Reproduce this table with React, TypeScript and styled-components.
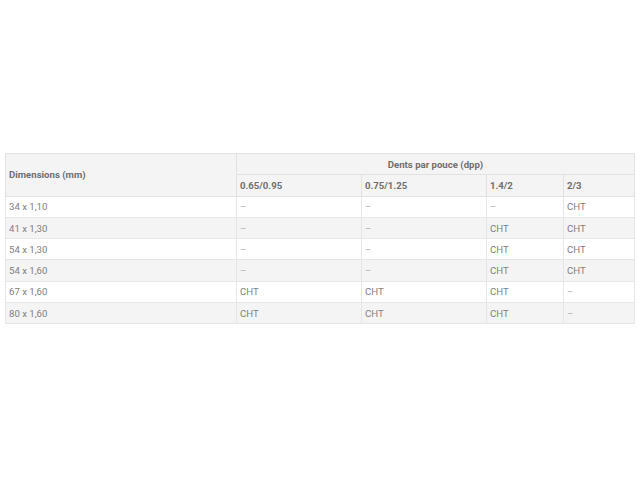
import React from "react";
import styled, { createGlobalStyle } from "styled-components";

const Global = createGlobalStyle`
  html, body { margin: 0; padding: 0; background: #fff; }
  body { font-family: Roboto, "Liberation Sans", Arial, sans-serif; }
`;

const Page = styled.div`
  width: 640px;
  height: 480px;
  padding: 153px 6px 0 5px;
  box-sizing: border-box;
`;

const Table = styled.table`
  width: 629px;
  border-collapse: collapse;
  table-layout: fixed;
  font-size: 9.6px;
  color: #7a7a7a;
  border: 1px solid #e6e6e6;
`;

const Th = styled.th<{ $center?: boolean }>`
  background: #f4f4f4;
  border: 1px solid #e2e2e2;
  font-weight: bold;
  color: #6f6f6f;
  text-align: ${(p) => (p.$center ? "center" : "left")};
  padding: 0 3px;
  height: 20.3px;
`;

const Row = styled.tr<{ $alt: boolean }>`
  background: ${(p) => (p.$alt ? "#f4f4f4" : "#fff")};
`;

const Td = styled.td<{ $dash?: boolean }>`
  border: 1px solid #e6e6e6;
  padding: 0 3px;
  height: 20.3px;
  color: ${(p) => (p.$dash ? "#b0b0b0" : "#808080")};
`;

const rows: [string, string, string, string, string][] = [
  ["34 x 1,10", "–", "–", "–", "CHT"],
  ["41 x 1,30", "–", "–", "CHT", "CHT"],
  ["54 x 1,30", "–", "–", "CHT", "CHT"],
  ["54 x 1,60", "–", "–", "CHT", "CHT"],
  ["67 x 1,60", "CHT", "CHT", "CHT", "–"],
  ["80 x 1,60", "CHT", "CHT", "CHT", "–"],
];

export default function App() {
  return (
    <>
      <Global />
      <Page>
        <Table>
          <colgroup>
            <col style={{ width: 231 }} />
            <col style={{ width: 125 }} />
            <col style={{ width: 125 }} />
            <col style={{ width: 77 }} />
            <col style={{ width: 71 }} />
          </colgroup>
          <thead>
            <tr>
              <Th rowSpan={2}>Dimensions (mm)</Th>
              <Th colSpan={4} $center>
                Dents par pouce (dpp)
              </Th>
            </tr>
            <tr>
              <Th>0.65/0.95</Th>
              <Th>0.75/1.25</Th>
              <Th>1.4/2</Th>
              <Th>2/3</Th>
            </tr>
          </thead>
          <tbody>
            {rows.map((r, i) => (
              <Row key={i} $alt={i % 2 === 1}>
                {r.map((c, j) => (
                  <Td key={j} $dash={c === "–"}>
                    {c}
                  </Td>
                ))}
              </Row>
            ))}
          </tbody>
        </Table>
      </Page>
    </>
  );
}
